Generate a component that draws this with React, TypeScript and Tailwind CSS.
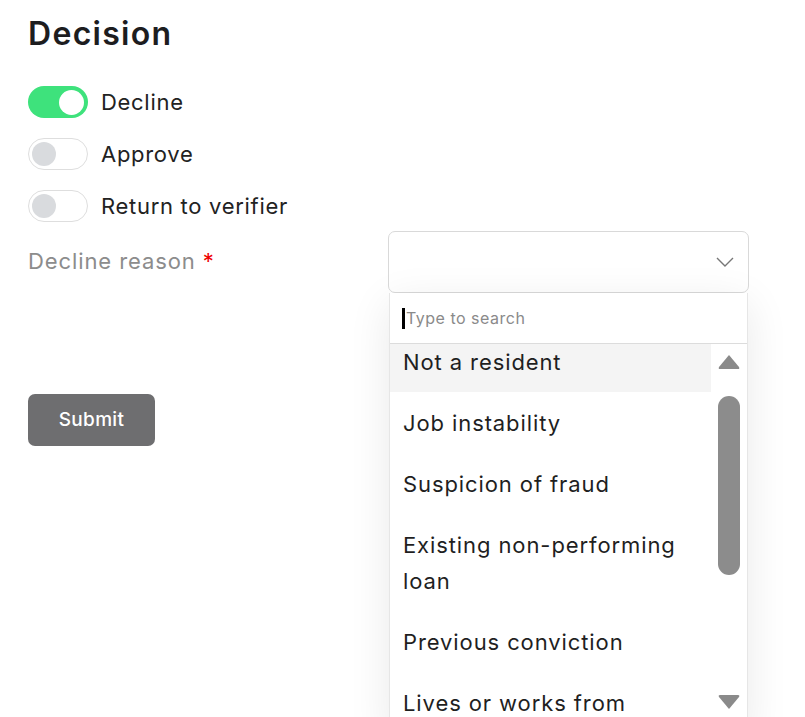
import React from "react";

const reasons = [
  "Not a resident",
  "Job instability",
  "Suspicion of fraud",
  "Existing non-performing loan",
  "Previous conviction",
  "Lives or works from abroad",
];

const Toggle = ({ on, label }: { on?: boolean; label: string }) => {
  return (
    <div className="flex items-center h-[52px]">
      {on ? (
        <div className="w-[60px] h-[32px] rounded-full bg-[#3ee27c] flex items-center justify-end pr-[4px]">
          <div className="w-[25px] h-[25px] rounded-full bg-white" />
        </div>
      ) : (
        <div className="w-[60px] h-[32px] rounded-full bg-white border border-[#dedede] flex items-center pl-[3px]">
          <div className="w-[24px] h-[24px] rounded-full bg-[#d9dbde]" />
        </div>
      )}
      <span className="ml-[13px] text-[22px] tracking-[0.7px] text-[#222]">{label}</span>
    </div>
  );
};

export default function App() {
  return (
    <div className="w-[805px] h-[717px] overflow-hidden bg-white pl-[28px] pt-[13px] font-['Inter',sans-serif]">
      <h1 className="text-[32px] font-semibold tracking-[1.3px] text-[#1d1d1f] leading-[42px]">Decision</h1>

      <div className="mt-[21px]">
        <Toggle on label="Decline" />
        <Toggle label="Approve" />
        <Toggle label="Return to verifier" />
      </div>

      <div className="flex mt-[-1px]">
        <div className="w-[360px] pt-[15px] text-[22px] tracking-[0.9px] text-[#8c8c8c] leading-[30px]">
          Decline reason <span className="text-[#e00]">*</span>
        </div>
        <div className="relative w-[361px]">
          <div className="h-[62px] rounded-[7px] border border-[#d9d9d9] flex items-center justify-end pr-[14px]">
            <svg width="18" height="10" viewBox="0 0 18 10" fill="none" stroke="#777" strokeWidth="1.4">
              <path d="M1 1l8 8 8-8" />
            </svg>
          </div>
          <div className="absolute left-[1px] top-[62px] w-[359px] h-[440px] bg-white border-x border-[#e6e6e6] shadow-[0_10px_40px_rgba(0,0,0,0.09)] flex flex-col">
            <div className="h-[51px] border-b border-[#dcdcdc] flex items-center pl-[12px] shrink-0">
              <div className="w-[3px] h-[21px] bg-black" />
              <span className="ml-[1px] text-[16px] tracking-[0.5px] text-[#8a8a8a]">Type to search</span>
            </div>
            <div className="flex flex-1 overflow-hidden">
              <div className="w-[321px] overflow-hidden">
                <div className="-mt-[13px]">
                  {reasons.map((r, i) => (
                    <div
                      key={r}
                      className={
                        i === 0
                          ? "px-[13px] py-[12.5px] text-[22px] tracking-[0.9px] leading-[36px] text-[#1f1f1f] bg-[#f4f4f4]"
                          : "px-[13px] py-[12.5px] text-[22px] tracking-[0.9px] leading-[36px] text-[#1f1f1f]"
                      }
                    >
                      {r}
                    </div>
                  ))}
                </div>
              </div>
              <div className="flex-1 flex flex-col items-center pt-[9px]">
                <svg width="24" height="18" viewBox="0 0 24 18">
                  <path d="M12 2 L22 14 Q23 16 21 16 L3 16 Q1 16 2 14 Z" fill="#8a8a8a" />
                </svg>
                <div className="mt-[25px] w-[22px] h-[179px] rounded-full bg-[#8c8c8c]" />
                <div className="mt-[118px]">
                  <svg width="24" height="18" viewBox="0 0 24 18">
                    <path d="M12 16 L22 4 Q23 2 21 2 L3 2 Q1 2 2 4 Z" fill="#8a8a8a" />
                  </svg>
                </div>
              </div>
            </div>
          </div>
        </div>
      </div>

      <button className="mt-[101px] w-[127px] h-[52px] rounded-[7px] bg-[#6e6e70] text-white text-[19px] font-medium tracking-[0.3px]">
        Submit
      </button>
    </div>
  );
}
